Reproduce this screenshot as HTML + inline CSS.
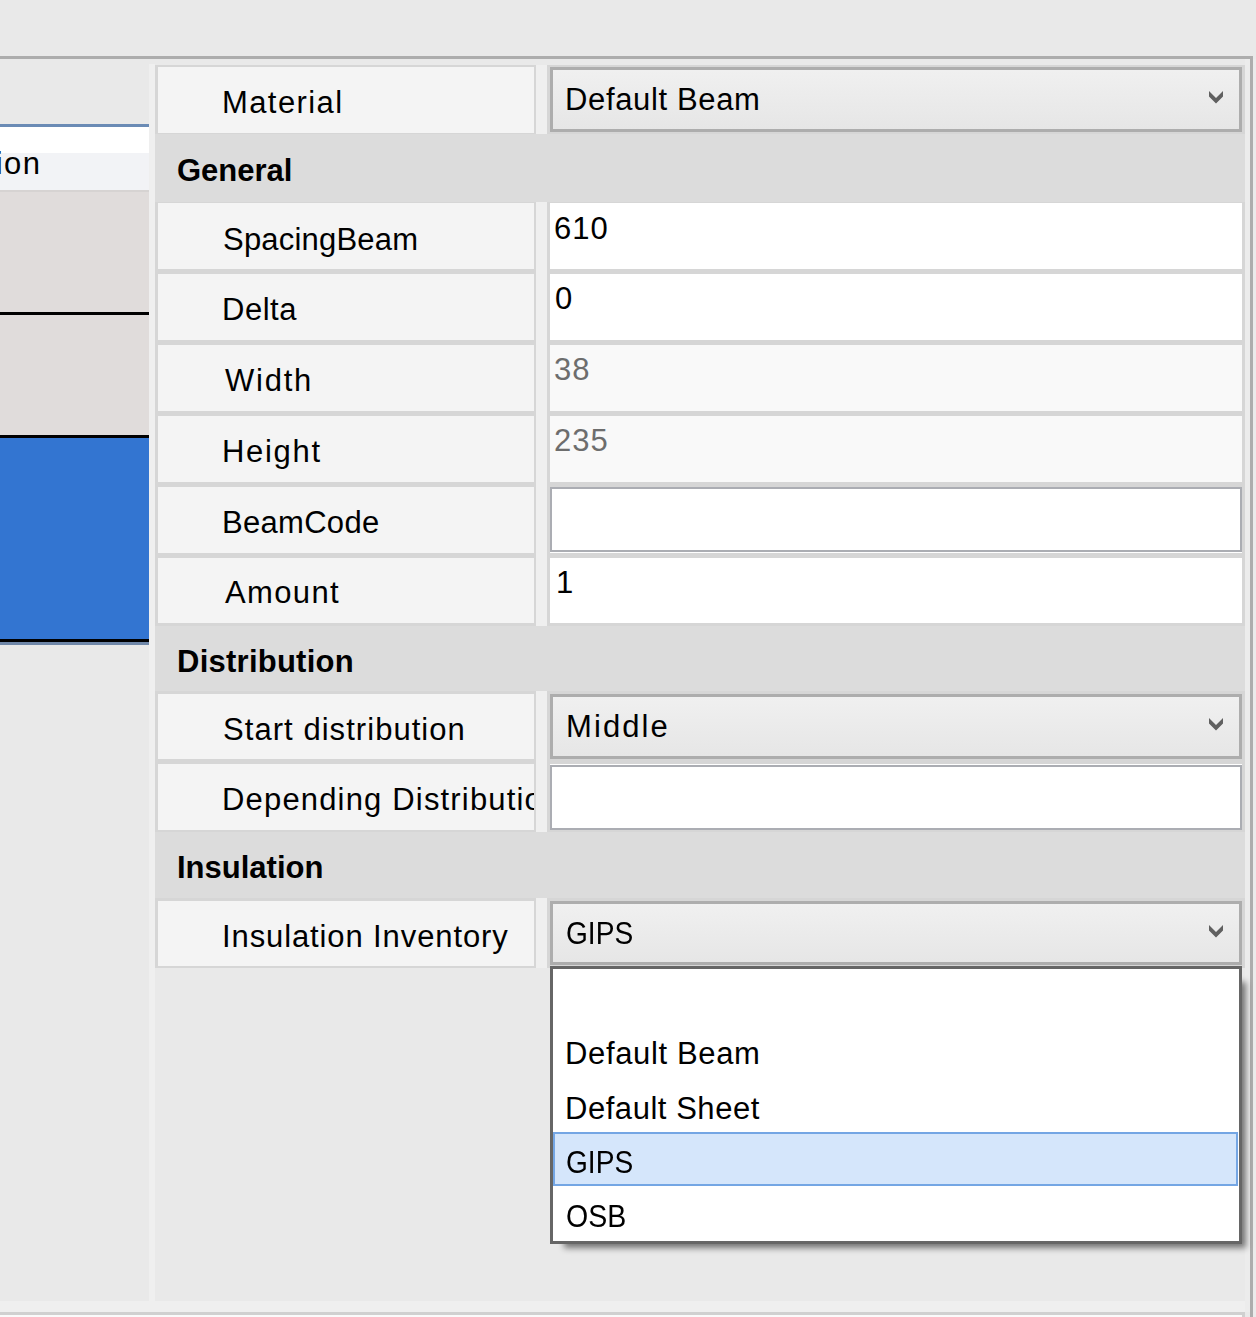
<!DOCTYPE html>
<html><head><meta charset="utf-8">
<style>
html,body{margin:0;padding:0;}
body{width:1256px;height:1317px;overflow:hidden;position:relative;background:#e9e9e9;font-family:"Liberation Sans",sans-serif;}
.a{position:absolute;}
.t{position:absolute;font-size:31px;line-height:36px;white-space:nowrap;color:#000;}
.b{font-weight:bold;}
.nm{left:158px;width:376px;background:#f4f4f4;}
.vc{left:550px;width:692px;background:#fff;}
.combo{position:absolute;left:550px;width:686px;border:3px solid #adadad;background:linear-gradient(#f0f0f0,#e6e6e6);}
.tb{position:absolute;left:550px;width:688px;border:2px solid #abadb3;background:#fff;}
.hdr{position:absolute;left:155px;width:1090px;background:#dcdcdc;}
</style></head><body>

<!-- outer frame -->
<div class="a" style="left:0;top:56px;width:1253px;height:3px;background:#adadad"></div>
<div class="a" style="left:1250px;top:56px;width:3px;height:1261px;background:#adadad"></div>
<div class="a" style="left:1253px;top:59px;width:3px;height:1258px;background:#ebebeb"></div>
<div class="a" style="left:1245px;top:59px;width:5px;height:1253px;background:#ececec"></div>

<!-- left panel -->
<div class="a" style="left:149px;top:64px;width:6px;height:1237px;background:#efefef"></div>
<div class="a" style="left:0;top:124px;width:149px;height:3px;background:#6b8bb5"></div>
<div class="a" style="left:0;top:127px;width:149px;height:26px;background:#ffffff"></div>
<div class="a" style="left:0;top:153px;width:149px;height:37px;background:#f2f3f6"></div>
<div class="a" style="left:0;top:190px;width:149px;height:2px;background:#d6d3d2"></div>
<div class="a" style="left:0;top:192px;width:149px;height:120px;background:#e0dcdb"></div>
<div class="a" style="left:0;top:312px;width:149px;height:3px;background:#000"></div>
<div class="a" style="left:0;top:315px;width:149px;height:120px;background:#e0dcdb"></div>
<div class="a" style="left:0;top:435px;width:149px;height:3px;background:#000"></div>
<div class="a" style="left:0;top:438px;width:149px;height:201px;background:#3375d1"></div>
<div class="a" style="left:0;top:639px;width:149px;height:3px;background:#000"></div>
<div class="a" style="left:0;top:642px;width:149px;height:3px;background:#6f87a8"></div>
<div class="a" style="left:0;top:127px;width:149px;height:63px;overflow:hidden">
  <div class="t" style="right:107.5px;top:19px;letter-spacing:1.5px">Distribution</div>
</div>

<!-- bottom area -->
<div class="a" style="left:0;top:1301px;width:1245px;height:11px;background:#efefef"></div>
<div class="a" style="left:0;top:1312px;width:1245px;height:5px;background:#d0d0d0"></div>
<div class="a" style="left:0;top:1315px;width:1242px;height:2px;background:#fafafa"></div>

<!-- grid background -->
<div class="a" style="left:155px;top:65px;width:1090px;height:903px;background:#d6d6d6"></div>
<div class="a" style="left:536px;top:65px;width:11px;height:903px;background:#efefef"></div>

<!-- headers -->
<div class="hdr" style="top:134px;height:68px"></div>
<div class="hdr" style="top:626px;height:65px"></div>
<div class="hdr" style="top:832px;height:66px"></div>
<div class="t b" style="left:177px;top:153px">General</div>
<div class="t b" style="left:177px;top:644px;letter-spacing:0.25px">Distribution</div>
<div class="t b" style="left:177px;top:850px">Insulation</div>

<!-- Material row -->
<div class="a nm" style="top:67px;height:66px"></div>
<div class="a vc" style="top:67px;height:66px;background:transparent"></div>
<div class="combo" style="top:67px;height:59px"></div>
<div class="t" style="left:222px;top:85px;letter-spacing:1.4px">Material</div>
<div class="t" style="left:565px;top:82px;letter-spacing:0.64px">Default Beam</div>

<!-- property rows -->
<div class="a nm" style="top:203px;height:66px"></div>
<div class="a vc" style="top:203px;height:66px"></div>
<div class="t" style="left:223px;top:222px;letter-spacing:0.2px">SpacingBeam</div>
<div class="t" style="left:554px;top:211px;letter-spacing:1px">610</div>

<div class="a nm" style="top:274px;height:66px"></div>
<div class="a vc" style="top:274px;height:66px"></div>
<div class="t" style="left:222px;top:292px;letter-spacing:0.5px">Delta</div>
<div class="t" style="left:555px;top:281px">0</div>

<div class="a nm" style="top:345px;height:66px"></div>
<div class="a vc" style="top:345px;height:66px;background:#f9f9f9"></div>
<div class="t" style="left:225px;top:363px;letter-spacing:1.75px">Width</div>
<div class="t" style="left:554px;top:352px;color:#6d6d6d;letter-spacing:1px">38</div>

<div class="a nm" style="top:416px;height:66px"></div>
<div class="a vc" style="top:416px;height:66px;background:#f9f9f9"></div>
<div class="t" style="left:222px;top:434px;letter-spacing:1.7px">Height</div>
<div class="t" style="left:554px;top:423px;color:#6d6d6d;letter-spacing:1px">235</div>

<div class="a nm" style="top:487px;height:66px"></div>
<div class="a vc" style="top:487px;height:66px"></div>
<div class="tb" style="top:487px;height:61px"></div>
<div class="t" style="left:222px;top:505px;letter-spacing:0.3px">BeamCode</div>

<div class="a nm" style="top:558px;height:65px"></div>
<div class="a vc" style="top:558px;height:65px"></div>
<div class="t" style="left:225px;top:575px;letter-spacing:1.35px">Amount</div>
<div class="t" style="left:556px;top:565px">1</div>

<div class="a nm" style="top:694px;height:65px"></div>
<div class="a vc" style="top:694px;height:65px;background:transparent"></div>
<div class="combo" style="top:694px;height:59px"></div>
<div class="t" style="left:223px;top:712px;letter-spacing:1.05px">Start distribution</div>
<div class="t" style="left:566px;top:709px;letter-spacing:2.1px">Middle</div>

<div class="a nm" style="top:764px;height:66px"></div>
<div class="a vc" style="top:764px;height:66px"></div>
<div class="tb" style="top:765px;height:61px"></div>
<div class="a" style="left:158px;top:764px;width:376px;height:66px;overflow:hidden">
  <div class="t" style="left:64px;top:18px;letter-spacing:1.17px">Depending Distribution</div>
</div>

<div class="a nm" style="top:901px;height:65px"></div>
<div class="a vc" style="top:901px;height:65px;background:transparent"></div>
<div class="combo" style="top:901px;height:58px"></div>
<div class="t" style="left:222px;top:919px;letter-spacing:0.89px">Insulation Inventory</div>
<div class="t" style="left:566px;top:916px;transform:scaleX(0.906);transform-origin:0 0">GIPS</div>

<!-- chevrons -->
<svg class="a" style="left:0;top:0" width="1256" height="1317">
  <g fill="#606060">
    <path d="M1209 91 L1216 98 L1223 91 L1223 96.5 L1216 103.5 L1209 96.5 Z"/>
    <path d="M1209 718 L1216 725 L1223 718 L1223 723.5 L1216 730.5 L1209 723.5 Z"/>
    <path d="M1209 925 L1216 932 L1223 925 L1223 930.5 L1216 937.5 L1209 930.5 Z"/>
  </g>
</svg>

<!-- popup -->
<div class="a" style="left:564px;top:982px;width:682px;height:266px;background:rgba(0,0,0,0.5);filter:blur(3px)"></div>
<div class="a" style="left:550px;top:966px;width:686px;height:272px;border:3px solid #666;background:#fff"></div>
<div class="a" style="left:553px;top:1132px;width:681px;height:50px;border:2px solid #74a6e4;background:#d5e6fb"></div>
<div class="t" style="left:565px;top:1036px;letter-spacing:0.64px">Default Beam</div>
<div class="t" style="left:565px;top:1091px;letter-spacing:0.54px">Default Sheet</div>
<div class="t" style="left:566px;top:1145px;transform:scaleX(0.906);transform-origin:0 0">GIPS</div>
<div class="t" style="left:566px;top:1199px;transform:scaleX(0.92);transform-origin:0 0">OSB</div>

</body></html>
